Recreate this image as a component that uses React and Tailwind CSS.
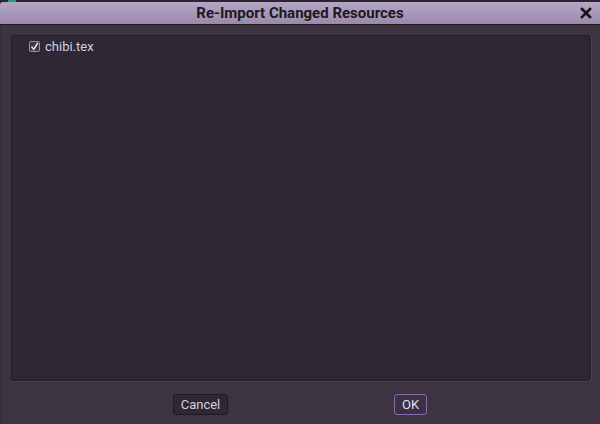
export default function App() {
  return (
    <div
      className="w-[600px] h-[424px] bg-[#2a2530] flex flex-col overflow-hidden"
      style={{ fontFamily: "Roboto, 'Noto Sans', sans-serif" }}
    >
      {/* strip of window behind */}
      <div className="h-[2px] flex shrink-0">
        <div className="w-[8px]" />
        <div className="w-[8px] bg-[#1f9a86]" />
      </div>

      {/* Title bar */}
      <div className="h-[22px] shrink-0 rounded-tl-[3px] bg-gradient-to-b from-[#b6a6c6] to-[#9b89ab] relative flex items-center justify-center">
        <span className="text-[15px] font-bold text-[#1a1a1a] leading-none">
          Re-Import Changed Resources
        </span>
        <span className="absolute right-[8px] top-[5px]">
          <svg width="12" height="12" viewBox="0 0 12 12">
            <path d="M2 2 L10 10 M10 2 L2 10" stroke="#111" strokeWidth="2.6" strokeLinecap="square" />
          </svg>
        </span>
      </div>
      <div className="h-px bg-[#1e1a22] shrink-0" />

      {/* Body */}
      <div className="flex-1 bg-[#3c3541] border-l-[2px] border-[#34303a] flex flex-col pt-[10px] px-[9px]">
        <div className="h-[346px] bg-[#2d2833] border border-[#231f28] rounded-[3px] shadow-[1px_1px_0_#4a4350] pt-[4px] pl-[17px]">
          <div className="flex items-center gap-[5px]">
            <div className="w-[11px] h-[11px] bg-[#3f3549] border border-[#9a8cab] rounded-[2px] flex items-center justify-center">
              <svg width="9" height="9" viewBox="0 0 9 9">
                <path d="M1.5 4.5 L3.8 7.5 L7.8 0.8" fill="none" stroke="#ece6f2" strokeWidth="1.5" />
              </svg>
            </div>
            <span className="text-[13px] text-[#d6d0dc] leading-none">chibi.tex</span>
          </div>
        </div>

        <div className="flex-1 flex items-start pt-[13px]">
          <button className="ml-[162px] w-[55px] h-[21px] bg-[#2d2833] border border-[#1d1a22] rounded-[3px] text-[13px] text-[#d6d0dc] leading-none flex items-center justify-center">
            Cancel
          </button>
          <button className="ml-[166px] w-[33px] h-[21px] bg-[#3a3145] border border-[#8a6aa4] rounded-[3px] text-[13px] text-[#e4dfea] leading-none flex items-center justify-center">
            OK
          </button>
        </div>
      </div>
    </div>
  );
}
